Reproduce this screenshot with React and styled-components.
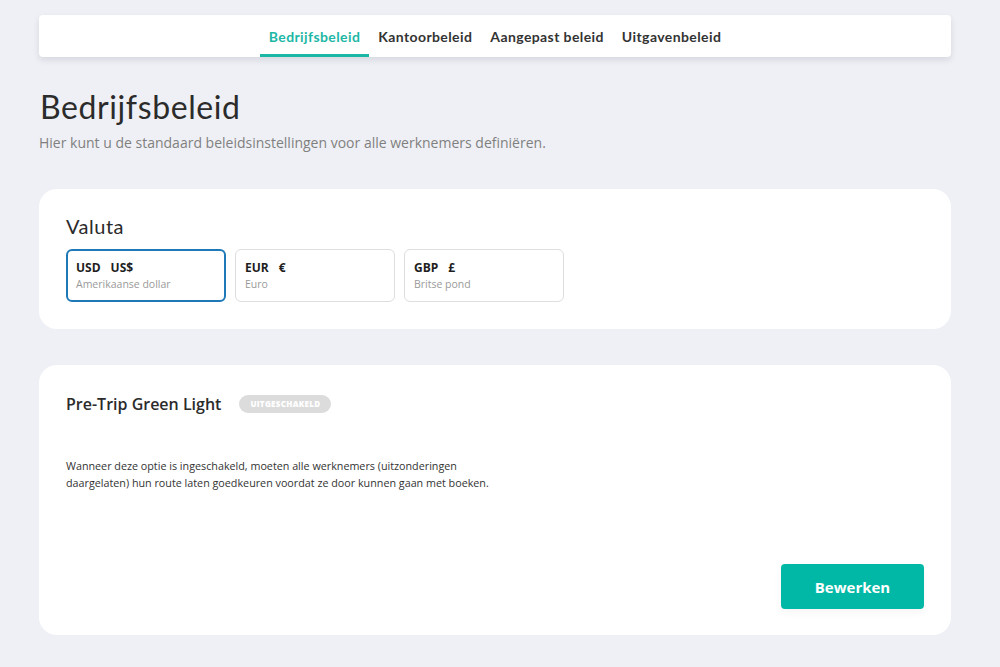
import React, { useState } from "react";
import styled, { createGlobalStyle } from "styled-components";

const GlobalStyle = createGlobalStyle`
  html, body {
    margin: 0;
    padding: 0;
    background: #eff0f5;
    font-family: "Open Sans", "Liberation Sans", sans-serif;
  }
`;

const tabs = ["Bedrijfsbeleid", "Kantoorbeleid", "Aangepast beleid", "Uitgavenbeleid"];

const currencies = [
  { code: "USD", symbol: "US$", name: "Amerikaanse dollar" },
  { code: "EUR", symbol: "€", name: "Euro" },
  { code: "GBP", symbol: "£", name: "Britse pond" },
];

const App = () => {
  const [activeTab, setActiveTab] = useState(0);
  const [currency, setCurrency] = useState("USD");

  return (
    <Page>
      <GlobalStyle />
      <TabBar>
        {tabs.map((tab, i) => (
          <Tab key={tab} active={i === activeTab} onClick={() => setActiveTab(i)}>
            {tab}
          </Tab>
        ))}
      </TabBar>

      <Title>Bedrijfsbeleid</Title>
      <Subtitle>
        Hier kunt u de standaard beleidsinstellingen voor alle werknemers definiëren.
      </Subtitle>

      <Card>
        <CardTitle>Valuta</CardTitle>
        <OptionRow>
          {currencies.map((c) => (
            <Option
              key={c.code}
              selected={c.code === currency}
              onClick={() => setCurrency(c.code)}
            >
              <OptionCode>
                {c.code}
                <span>{c.symbol}</span>
              </OptionCode>
              <OptionName>{c.name}</OptionName>
            </Option>
          ))}
        </OptionRow>
      </Card>

      <PolicyCard>
        <PolicyHeader>
          <PolicyTitle>Pre-Trip Green Light</PolicyTitle>
          <Badge>Uitgeschakeld</Badge>
        </PolicyHeader>
        <PolicyText>
          Wanneer deze optie is ingeschakeld, moeten alle werknemers (uitzonderingen
          daargelaten) hun route laten goedkeuren voordat ze door kunnen gaan met boeken.
        </PolicyText>
        <Actions>
          <EditButton>Bewerken</EditButton>
        </Actions>
      </PolicyCard>
    </Page>
  );
};

const Page = styled.div`
  width: 912px;
  margin: 0 auto;
  padding: 15px 0 32px 0;
  box-sizing: border-box;
  position: relative;
  left: -5px;
`;

const TabBar = styled.nav`
  height: 42px;
  background: #fff;
  border-radius: 4px;
  box-shadow: 0 3px 6px rgba(40, 45, 70, 0.12);
  display: flex;
  justify-content: center;
  align-items: stretch;
`;

const Tab = styled.button`
  border: none;
  background: none;
  cursor: pointer;
  padding: 3px 9px 0;
  font-family: "Lato", "Open Sans", sans-serif;
  font-weight: 700;
  font-size: 14px;
  letter-spacing: 0.4px;
  color: ${(p) => (p.active ? "#1db7a6" : "#333")};
  border-bottom: 3px solid ${(p) => (p.active ? "#1db7a6" : "transparent")};
`;

const Title = styled.h1`
  margin: 30px 0 0 1px;
  font-family: "Lato", "Open Sans", sans-serif;
  font-weight: 400;
  font-size: 32px;
  letter-spacing: 0.6px;
  color: #2b2b2b;
  line-height: 40px;
`;

const Subtitle = styled.p`
  margin: 6px 0 0 0;
  font-size: 14px;
  color: #808080;
  line-height: 20px;
`;

const Card = styled.section`
  margin-top: 36px;
  background: #fff;
  border-radius: 18px;
  padding: 24px 27px 27px;
`;

const CardTitle = styled.h2`
  margin: 0;
  font-family: "Lato", "Open Sans", sans-serif;
  font-weight: 400;
  font-size: 20px;
  letter-spacing: 0.5px;
  color: #2b2b2b;
  line-height: 26px;
`;

const OptionRow = styled.div`
  display: flex;
  gap: 9px;
  margin-top: 10px;
`;

const Option = styled.div`
  width: 160px;
  height: 53px;
  box-sizing: border-box;
  border-radius: 6px;
  border: ${(p) => (p.selected ? "2px solid #1f78b8" : "1px solid #dedede")};
  padding: ${(p) => (p.selected ? "9px 8px" : "10px 9px")};
  cursor: pointer;
`;

const OptionCode = styled.div`
  font-size: 12px;
  font-weight: 700;
  color: #1e1e1e;
  line-height: 16px;

  span {
    margin-left: 10px;
  }
`;

const OptionName = styled.div`
  font-size: 10.5px;
  color: #9a9a9a;
  line-height: 16px;
`;

const PolicyCard = styled(Card)`
  padding: 28px 27px 26px;
`;

const PolicyHeader = styled.div`
  display: flex;
  align-items: center;
  gap: 18px;
`;

const PolicyTitle = styled.h3`
  margin: 0;
  font-size: 16px;
  font-weight: 600;
  color: #2b2b2b;
  line-height: 22px;
`;

const Badge = styled.span`
  background: #dcdcdc;
  color: #fff;
  border-radius: 9px;
  font-size: 8px;
  font-weight: 800;
  text-transform: uppercase;
  letter-spacing: 0.3px;
  padding: 4px 11px;
  line-height: 10px;
`;

const PolicyText = styled.p`
  margin: 43px 0 0 0;
  width: 430px;
  font-size: 10.75px;
  line-height: 17px;
  color: #333;
`;

const Actions = styled.div`
  display: flex;
  justify-content: flex-end;
  margin-top: 72px;
`;

const EditButton = styled.button`
  width: 143px;
  height: 45px;
  border: none;
  border-radius: 4px;
  background: #00b8a5;
  color: #fff;
  font-family: "Open Sans", sans-serif;
  font-weight: 700;
  font-size: 15px;
  cursor: pointer;
  box-shadow: 0 4px 8px rgba(0, 0, 0, 0.04);
`;

export default App;
